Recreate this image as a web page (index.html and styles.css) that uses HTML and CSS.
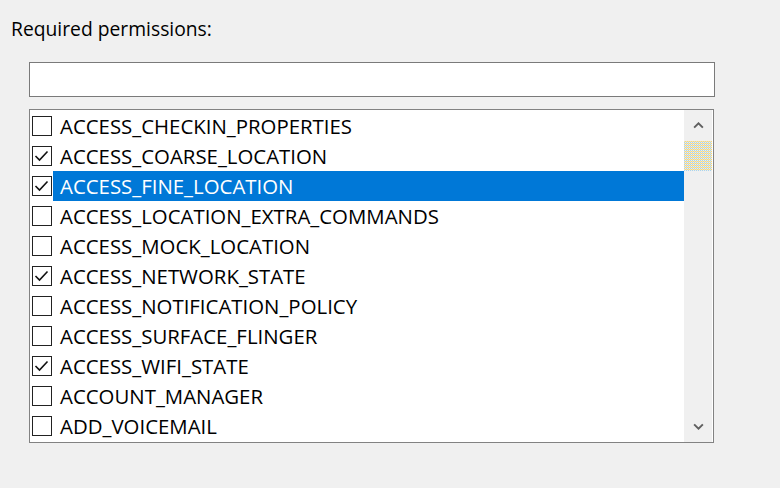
FILE: index.html
```html
<!DOCTYPE html>
<html>
<head>
<meta charset="utf-8">
<link rel="stylesheet" href="styles.css">
</head>
<body>
<div class="dialog">
  <div class="caption">Required permissions:</div>
  <div class="search"></div>
  <div class="list">
    <div class="rows">
      <div class="row"><span class="box"></span><span class="label">ACCESS_CHECKIN_PROPERTIES</span></div>
      <div class="row"><span class="box checked"><svg viewBox="0 0 18 18"><path d="M2.5 9 L6.5 13 L14.5 4.5"/></svg></span><span class="label">ACCESS_COARSE_LOCATION</span></div>
      <div class="row selected"><span class="box checked"><svg viewBox="0 0 18 18"><path d="M2.5 9 L6.5 13 L14.5 4.5"/></svg></span><span class="label">ACCESS_FINE_LOCATION</span></div>
      <div class="row"><span class="box"></span><span class="label">ACCESS_LOCATION_EXTRA_COMMANDS</span></div>
      <div class="row"><span class="box"></span><span class="label">ACCESS_MOCK_LOCATION</span></div>
      <div class="row"><span class="box checked"><svg viewBox="0 0 18 18"><path d="M2.5 9 L6.5 13 L14.5 4.5"/></svg></span><span class="label">ACCESS_NETWORK_STATE</span></div>
      <div class="row"><span class="box"></span><span class="label">ACCESS_NOTIFICATION_POLICY</span></div>
      <div class="row"><span class="box"></span><span class="label">ACCESS_SURFACE_FLINGER</span></div>
      <div class="row"><span class="box checked"><svg viewBox="0 0 18 18"><path d="M2.5 9 L6.5 13 L14.5 4.5"/></svg></span><span class="label">ACCESS_WIFI_STATE</span></div>
      <div class="row"><span class="box"></span><span class="label">ACCOUNT_MANAGER</span></div>
      <div class="row"><span class="box"></span><span class="label">ADD_VOICEMAIL</span></div>
    </div>
    <div class="scrollbar">
      <div class="arrow"><svg viewBox="0 0 12 8"><path d="M1 6.5 L6 1.5 L11 6.5"/></svg></div>
      <div class="thumb"></div>
      <div class="track"></div>
      <div class="arrow"><svg viewBox="0 0 12 8"><path d="M1 1.5 L6 6.5 L11 1.5"/></svg></div>
    </div>
  </div>
</div>
</body>
</html>
```

FILE: styles.css
```css
html, body {
  margin: 0;
  padding: 0;
  background: #f0f0f0;
  width: 780px;
  height: 488px;
  overflow: hidden;
}

.dialog {
  font-family: "Open Sans", "Noto Sans", sans-serif;
  font-size: 20.4px;
  color: #000;
  padding-top: 14px;
}

.caption {
  margin-left: 11px;
  height: 30px;
  line-height: 30px;
  font-size: 19.3px;
  color: #000;
}

.search {
  box-sizing: border-box;
  margin: 18px 0 0 29px;
  width: 686px;
  height: 35px;
  background: #fff;
  border: 1px solid #7a7a7a;
}

.list {
  box-sizing: border-box;
  margin: 12px 0 0 29px;
  width: 685px;
  height: 334px;
  background: #fff;
  border: 1px solid #828282;
  display: flex;
  overflow: hidden;
}

.rows {
  flex: 1;
  padding-top: 1px;
  padding-left: 2px;
}

.row {
  height: 30px;
  display: flex;
  align-items: center;
}

.box {
  box-sizing: border-box;
  width: 20px;
  height: 20px;
  border: 1px solid #222;
  background: #fff;
  flex: none;
  display: flex;
}

.box svg {
  width: 18px;
  height: 18px;
}

.box svg path {
  fill: none;
  stroke: #111;
  stroke-width: 1.6;
}

.label {
  flex: 1;
  height: 30px;
  line-height: 31px;
  margin-left: 1px;
  padding-left: 7px;
  white-space: nowrap;
}

.row.selected .label {
  background: #0078d7;
  color: #fff;
}

.scrollbar {
  width: 28px;
  margin-right: 1px;
  background: #f0f0f0;
  display: flex;
  flex-direction: column;
}

.arrow {
  height: 31px;
  display: flex;
  align-items: center;
  justify-content: center;
}

.arrow svg {
  width: 11px;
  height: 7px;
}

.arrow svg path {
  fill: none;
  stroke: #606060;
  stroke-width: 2.2;
}

.thumb {
  height: 30px;
  background: repeating-conic-gradient(#f4d67f 0 25%, #eef0e8 0 50%, #a8d2f2 0 75%, #f6e6b4 0 100%) 0 0 / 2px 2px;
}

.track {
  flex: 1;
}
```
